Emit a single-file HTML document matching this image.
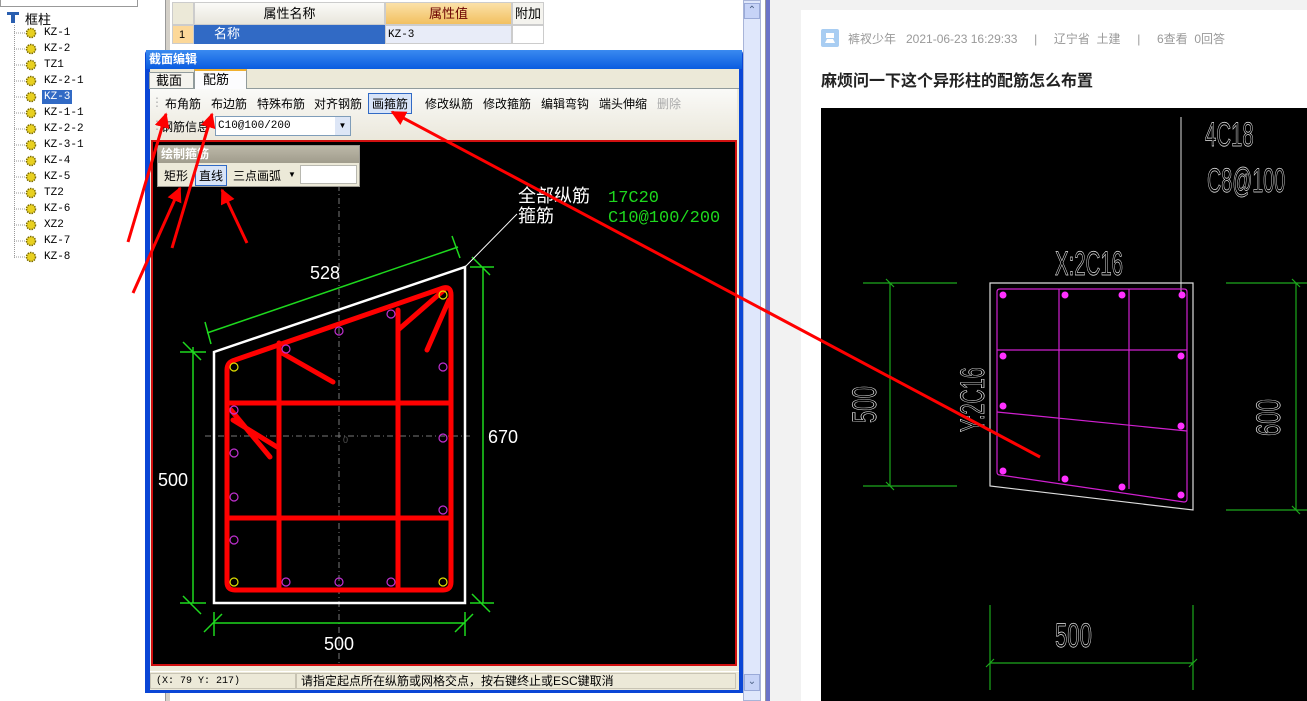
<!DOCTYPE html>
<html><head><meta charset="utf-8">
<style>
*{margin:0;padding:0;box-sizing:border-box}
body{width:1307px;height:701px;overflow:hidden;background:#f2f2f2;position:relative;font-family:"Liberation Sans","Noto Sans CJK SC",sans-serif;font-size:12px}
.a{position:absolute}
.tree div{position:absolute;left:44px;font-family:"Liberation Mono","Noto Sans CJK SC",monospace;font-size:11px;color:#000;height:14px;line-height:14px}
.tb span{position:absolute;top:0;font-size:12px;color:#000}
.cad{font-family:"Liberation Sans",sans-serif}
</style></head><body>
<div class="a" style="left:0;top:0;width:165px;height:701px;background:#fff"></div>
<div class="a" style="left:0;top:0;width:138px;height:7px;border:1px solid #999;border-top:none;background:#fff"></div>
<div class="a" style="left:165px;top:0;width:5px;height:701px;background:#d4d0c8;border-left:1px solid #999"></div>
<div class="a" style="left:6px;top:10px;width:14px;height:14px"><svg width="14" height="14"><path d="M1 2h12v3H1z M5 5h4v8H5z" fill="#2a5fb0"/></svg></div>
<div class="a" style="left:25px;top:9px;font-size:13px">框柱</div>
<div class="a" style="left:14px;top:25px;width:1px;height:233px;border-left:1px dotted #999"></div>
<div class="tree">
<div style="top:26px">KZ-1</div><div style="top:42px">KZ-2</div><div style="top:58px">TZ1</div><div style="top:74px">KZ-2-1</div>
<div style="top:90px;background:#316ac5;color:#fff;padding:0 2px;left:42px">KZ-3</div>
<div style="top:106px">KZ-1-1</div><div style="top:122px">KZ-2-2</div><div style="top:138px">KZ-3-1</div><div style="top:154px">KZ-4</div><div style="top:170px">KZ-5</div><div style="top:186px">TZ2</div><div style="top:202px">KZ-6</div><div style="top:218px">XZ2</div><div style="top:234px">KZ-7</div><div style="top:250px">KZ-8</div>
</div>
<svg class="a" style="left:0;top:0" width="45" height="270">
<g stroke="#999" stroke-dasharray="1,1"><path d="M14 33h12M14 49h12M14 65h12M14 81h12M14 97h12M14 113h12M14 129h12M14 145h12M14 161h12M14 177h12M14 193h12M14 209h12M14 225h12M14 241h12M14 257h12"/></g>
<g fill="#e8d020" stroke="#7a6a00" stroke-width="1.5" stroke-dasharray="1.5,1">
<circle cx="31" cy="33" r="4.5"/><circle cx="31" cy="49" r="4.5"/><circle cx="31" cy="65" r="4.5"/><circle cx="31" cy="81" r="4.5"/><circle cx="31" cy="97" r="4.5"/><circle cx="31" cy="113" r="4.5"/><circle cx="31" cy="129" r="4.5"/><circle cx="31" cy="145" r="4.5"/><circle cx="31" cy="161" r="4.5"/><circle cx="31" cy="177" r="4.5"/><circle cx="31" cy="193" r="4.5"/><circle cx="31" cy="209" r="4.5"/><circle cx="31" cy="225" r="4.5"/><circle cx="31" cy="241" r="4.5"/><circle cx="31" cy="257" r="4.5"/></g>
</svg>

<div class="a" style="left:170px;top:0;width:574px;height:701px;background:#fff"></div>
<div class="a" style="left:172px;top:2px;width:22px;height:23px;background:#ece9d8;border:1px solid #ccc"></div>
<div class="a" style="left:194px;top:2px;width:191px;height:23px;background:linear-gradient(#fbfbf8,#e8e6dc);border:1px solid #ccc;text-align:center;line-height:22px;font-size:13px">属性名称</div>
<div class="a" style="left:385px;top:2px;width:127px;height:23px;background:linear-gradient(#fbe1a8,#f2c060);border:1px solid #ccc;text-align:center;line-height:22px;font-size:13px;color:#6a0000">属性值</div>
<div class="a" style="left:512px;top:2px;width:32px;height:23px;background:#f4f3ee;border:1px solid #ccc;text-align:center;line-height:22px;font-size:13px">附加</div>
<div class="a" style="left:172px;top:25px;width:22px;height:19px;background:#fcd899;border:1px solid #ccc;line-height:18px;padding-left:6px;font-size:11px">1</div>
<div class="a" style="left:194px;top:25px;width:191px;height:19px;background:#316ac5;color:#fff;line-height:18px;padding-left:20px;font-size:13px">名称</div>
<div class="a" style="left:385px;top:25px;width:127px;height:19px;background:#e8ecf8;border:1px solid #ccc;line-height:18px;padding-left:2px;font-family:'Liberation Mono',monospace;font-size:11px">KZ-3</div>
<div class="a" style="left:512px;top:25px;width:32px;height:19px;border:1px solid #ccc"></div>
<div class="a" style="left:743px;top:0;width:18px;height:701px;background:#dfe7fb;border:1px solid #a8b4d8"></div>
<div class="a" style="left:744px;top:3px;width:16px;height:16px;background:#c6d3f7;border:1px solid #9aaad8;color:#4d6185;font-size:10px;text-align:center;line-height:14px">⌃</div>
<div class="a" style="left:744px;top:674px;width:16px;height:17px;background:#c6d3f7;border:1px solid #9aaad8;color:#4d6185;font-size:10px;text-align:center;line-height:14px">⌄</div>
<div class="a" style="left:761px;top:0;width:5px;height:701px;background:#fff;border-right:1px solid #999"></div>
<div class="a" style="left:766px;top:0;width:4px;height:701px;background:#6c74c8"></div>

<div class="a" style="left:145px;top:50px;width:598px;height:643px;background:#0a46d6;border-radius:4px 4px 0 0"></div>
<div class="a" style="left:146px;top:50px;width:596px;height:19px;background:linear-gradient(#3a8af0,#0a5ce0);color:#fff;font-weight:bold;font-size:12px;line-height:19px;padding-left:3px">截面编辑</div>
<div class="a" style="left:150px;top:69px;width:589px;height:621px;background:#ece9d8"></div>
<div class="a" style="left:150px;top:88px;width:589px;height:1px;background:#919b9c"></div>
<div class="a" style="left:149px;top:72px;width:45px;height:17px;background:#f5f4ee;border:1px solid #919b9c;font-size:13px;line-height:16px;padding-left:6px">截面</div>
<div class="a" style="left:194px;top:69px;width:53px;height:21px;background:#fcfcfe;border:1px solid #919b9c;border-top:2px solid #f0b030;border-bottom:none;font-size:13px;line-height:17px;padding-left:8px">配筋</div>
<div class="a" style="left:150px;top:89px;width:587px;height:50px;background:linear-gradient(#fafaf8,#ebe8dc)"></div>
<div class="a tb" style="left:150px;top:95px;width:590px;height:16px">
<span style="left:1px;color:#aaa">⋮</span><span style="left:15px">布角筋</span><span style="left:61px">布边筋</span><span style="left:107px">特殊布筋</span><span style="left:164px">对齐钢筋</span>
<span style="left:218px;top:-2px;border:1px solid #316ac5;background:#d8e4f8;padding:1px 3px">画箍筋</span>
<span style="left:275px">修改纵筋</span><span style="left:333px">修改箍筋</span><span style="left:391px">编辑弯钩</span><span style="left:449px">端头伸缩</span><span style="left:507px;color:#aaa">删除</span></div>
<div class="a tb" style="left:150px;top:118px;width:300px;height:16px"><span style="left:1px;color:#aaa">⋮</span><span style="left:11px">钢筋信息</span></div>
<div class="a" style="left:215px;top:116px;width:136px;height:20px;background:#fff;border:1px solid #7f9db9;font-family:'Liberation Mono',monospace;font-size:11px;line-height:18px;padding-left:2px">C10@100/200</div>
<div class="a" style="left:335px;top:117px;width:15px;height:18px;background:#dde6f6;font-size:8px;text-align:center;line-height:18px">▼</div>
<div class="a" style="left:151px;top:140px;width:586px;height:526px;background:#000;border:2px solid #d01010"></div>
<div class="a" style="left:150px;top:671px;width:589px;height:19px;background:#ece9d8;border-top:1px solid #fff"></div>
<div class="a" style="left:150px;top:673px;width:146px;height:16px;border:1px solid #c8c4b4;font-family:'Liberation Mono',monospace;font-size:10px;line-height:15px;padding-left:5px">(X: 79 Y: 217)</div>
<div class="a" style="left:296px;top:673px;width:440px;height:16px;border:1px solid #c8c4b4;font-size:12px;line-height:15px;padding-left:4px">请指定起点所在纵筋或网格交点，按右键终止或ESC键取消</div>

<svg class="a" style="left:0;top:0" width="770" height="701">
<g stroke="#777" stroke-dasharray="6,3,1,3" stroke-width="1"><path d="M339 185V665M205 436H470"/></g>
<g stroke="#1ed81e" stroke-width="1.5" fill="none">
<path d="M207 333L458 247M205 322l6 22M452 236l8 22"/>
<path d="M193 347V603M180 352h26M180 603h26M183 342l18 18M183 596l18 18"/>
<path d="M483 267V603M470 267h24M470 603h24M472 257l18 18M472 594l18 18"/>
<path d="M214 623H465M214 612v24M465 612v24M204 632l18-18M455 632l18-18"/>
</g>
<path d="M214 603V352L465 267V603Z" fill="none" stroke="#fff" stroke-width="2.5"/>
<path d="M465 267L517 214" stroke="#fff" stroke-width="1"/>
<g stroke="#f00" stroke-width="5" fill="none" stroke-linecap="round">
<path d="M227 370Q227 362 235 360L443 288Q451 286 451 295V582Q451 590 443 590H235Q227 590 227 582Z"/>
<path d="M279 343V590M398 310V590M227 403H451M227 518H451"/>
<path d="M282 353L333 382M231 410L270 457M233 420L277 447M398 330L444 290M427 350L449 300"/>
</g>
<g fill="none" stroke-width="1.2">
<g stroke="#e0e000"><circle cx="234" cy="367" r="4"/><circle cx="443" cy="295" r="4"/><circle cx="234" cy="582" r="4"/><circle cx="443" cy="582" r="4"/></g>
<g stroke="#c030d0"><circle cx="286" cy="582" r="4"/><circle cx="339" cy="582" r="4"/><circle cx="391" cy="582" r="4"/><circle cx="234" cy="410" r="4"/><circle cx="234" cy="453" r="4"/><circle cx="234" cy="497" r="4"/><circle cx="234" cy="540" r="4"/><circle cx="443" cy="367" r="4"/><circle cx="443" cy="438" r="4"/><circle cx="443" cy="510" r="4"/><circle cx="286" cy="349" r="4"/><circle cx="339" cy="331" r="4"/><circle cx="391" cy="314" r="4"/></g>
</g>
<g class="cad" fill="#fff" font-size="18">
<text x="310" y="279">528</text><text x="488" y="443">670</text><text x="158" y="486">500</text><text x="324" y="650">500</text>
<text x="343" y="443" font-size="9" fill="#555">0</text>
</g>
<g font-family="Liberation Sans,Noto Sans CJK SC,sans-serif" font-size="18" fill="#fff"><text x="518" y="202">全部纵筋</text><text x="518" y="222">箍筋</text></g>
<g font-family="Liberation Mono,monospace" font-size="17" fill="#1ed81e"><text x="608" y="202">17C20</text><text x="608" y="222">C10@100/200</text></g>
</svg>
<div class="a" style="left:157px;top:145px;width:203px;height:42px;background:#ece9d8;border:1px solid #9a9890"></div>
<div class="a" style="left:158px;top:146px;width:201px;height:17px;background:linear-gradient(#bcb8a8,#a09c8c);color:#fff;font-weight:bold;font-size:12px;line-height:17px;padding-left:3px">绘制箍筋</div>
<div class="a tb" style="left:158px;top:167px;width:200px;height:16px"><span style="left:6px">矩形</span><span style="left:37px;top:-2px;border:1px solid #316ac5;background:#d8e4f8;padding:1px 3px">直线</span><span style="left:75px">三点画弧</span><span style="left:130px;font-size:8px;top:3px">▼</span></div>
<div class="a" style="left:300px;top:165px;width:57px;height:19px;background:#fff;border:1px solid #b8b8b0"></div>

<div class="a" style="left:801px;top:10px;width:506px;height:691px;background:#fff"></div>
<svg class="a" style="left:821px;top:29px" width="18" height="18"><rect width="18" height="18" rx="2" fill="#a8cdf2"/><path d="M5 4h8v5H5zM4 14h10l-2-4H6z" fill="#fff"/></svg>
<div class="a" style="left:848px;top:30px;font-size:12px;color:#999;white-space:pre">裤衩少年   2021-06-23 16:29:33     |     辽宁省  土建     |     6查看  0回答</div>
<div class="a" style="left:821px;top:67px;font-size:16px;font-weight:bold;color:#222">麻烦问一下这个异形柱的配筋怎么布置</div>
<div class="a" style="left:821px;top:108px;width:486px;height:593px;background:#000"></div>
<svg class="a" style="left:0;top:0" width="1307" height="701">
<g stroke="#1ca81c" stroke-width="1.2" fill="none">
<path d="M863 283H957M863 486H957M890 283V486M886 279l8 8M886 482l8 8"/>
<path d="M1226 283H1307M1226 510H1307M1296 283V510M1292 279l8 8M1292 506l8 8"/>
<path d="M990 605V690M1193 605V690M990 663H1193M986 667l8-8M1189 667l8-8"/>
</g>
<path d="M990 283H1193V510L990 486Z" fill="none" stroke="#ddd" stroke-width="1.2"/>
<path d="M1181 117V295" stroke="#ddd" stroke-width="1"/>
<g stroke="#d020d0" stroke-width="1.2" fill="none">
<path d="M997 292Q997 289 1000 289H1184Q1187 289 1187 292V499Q1187 502 1184 502L1000 475Q997 475 997 472Z"/>
<path d="M1059 289V481M1129 289V489M997 350H1187M997 412L1187 431"/>
</g>
<g fill="#ff30ff"><circle cx="1003" cy="295" r="3.5"/><circle cx="1065" cy="295" r="3.5"/><circle cx="1122" cy="295" r="3.5"/><circle cx="1182" cy="295" r="3.5"/><circle cx="1003" cy="356" r="3.5"/><circle cx="1181" cy="356" r="3.5"/><circle cx="1003" cy="406" r="3.5"/><circle cx="1181" cy="426" r="3.5"/><circle cx="1003" cy="471" r="3.5"/><circle cx="1065" cy="479" r="3.5"/><circle cx="1122" cy="487" r="3.5"/><circle cx="1181" cy="495" r="3.5"/></g>
<g fill="none" stroke="#e8e8e8" stroke-width="0.7" font-size="34" font-family="Liberation Sans,sans-serif">
<text x="0" y="0" transform="translate(1055,275) scale(0.6,1)">X:2C16</text>
<text x="0" y="0" transform="translate(1205,146) scale(0.6,1)">4C18</text>
<text x="0" y="0" transform="translate(1207,192) scale(0.58,1)">C8@100</text>
<text x="0" y="0" transform="translate(1055,647) scale(0.65,1)">500</text>
<text x="0" y="0" transform="translate(876,423) rotate(-90) scale(0.65,1)">500</text>
<text x="0" y="0" transform="translate(984,432) rotate(-90) scale(0.58,1)">Y:2C16</text>
<text x="0" y="0" transform="translate(1280,436) rotate(-90) scale(0.65,1)">600</text>
</g>
</svg>

<svg class="a" style="left:0;top:0" width="1307" height="701">
<defs><marker id="ah" viewBox="0 0 10 10" refX="9" refY="5" markerWidth="5" markerHeight="5" orient="auto"><path d="M0 0L10 5L0 10Z" fill="#f00"/></marker></defs>
<g stroke="#f00" stroke-width="3" fill="none" marker-end="url(#ah)">
<path d="M128 242L166 114"/>
<path d="M172 248L212 114"/>
<path d="M133 293L180 188"/>
<path d="M247 243L222 190"/>
<path d="M1040 457L392 112"/>
</g>
</svg>
</body></html>
